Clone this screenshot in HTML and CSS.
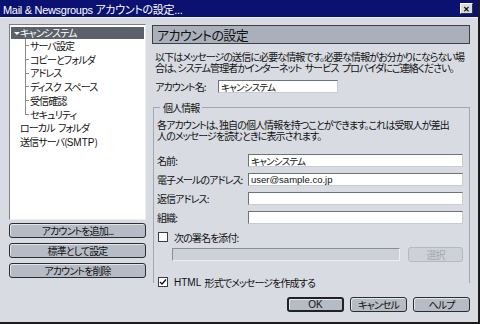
FILE: index.html
```html
<!DOCTYPE html>
<html lang="ja">
<head>
    <meta charset="UTF-8">
    <meta name="viewport" content="width=device-width, initial-scale=1.0">
    <title>アカウントの設定</title>
    <link rel="stylesheet" href="styles.css">
</head>
<body>
    <div class="window">
        <div class="titlebar">
            <span class="title">Mail &amp; Newsgroups アカウントの設定...</span>
            <span class="close">✕</span>
        </div>

        <div class="main">
            <div class="side">
                <div class="tree">
                    <div class="node selected"><span class="twisty"></span>キャンシステム</div>
                    <ul class="children">
                        <li>サーバ設定</li>
                        <li>コピーとフォルダ</li>
                        <li>アドレス</li>
                        <li>ディスク スペース</li>
                        <li>受信確認</li>
                        <li>セキュリティ</li>
                    </ul>
                    <div class="node">ローカル フォルダ</div>
                    <div class="node">送信サーバ(<span class="latin">SMTP</span>)</div>
                </div>
                <div class="side-buttons">
                    <button class="btn">アカウントを追加...</button>
                    <button class="btn">標準として設定</button>
                    <button class="btn">アカウントを削除</button>
                </div>
            </div>

            <div class="panel">
                <div class="panel-head">アカウントの設定</div>
                <p class="intro">以下はメッセージの送信に必要な情報です。必要な情報がお分かりにならない場<br>合は、システム管理者かインターネット サービス プロバイダにご連絡ください。</p>
                <div class="account-row">
                    <label>アカウント名:</label>
                    <input class="field account-field" type="text" value="キャンシステム">
                </div>

                <fieldset class="group">
                    <legend>個人情報</legend>
                    <p class="group-text">各アカウントは、独自の個人情報を持つことができます。これは受取人が差出<br>人のメッセージを読むときに表示されます。</p>
                    <div class="form-row">
                        <label>名前:</label>
                        <input class="field" type="text" value="キャンシステム">
                    </div>
                    <div class="form-row">
                        <label>電子メールのアドレス:</label>
                        <input class="field latin" type="text" value="user@sample.co.jp">
                    </div>
                    <div class="form-row">
                        <label>返信アドレス:</label>
                        <input class="field" type="text" value="">
                    </div>
                    <div class="form-row">
                        <label>組織:</label>
                        <input class="field" type="text" value="">
                    </div>
                    <div class="check-row sig-check">
                        <span class="check"></span>次の署名を添付:
                    </div>
                    <div class="sig-row">
                        <input class="field sig-field" type="text" disabled>
                        <button class="btn pick" disabled>選択</button>
                    </div>
                    <div class="check-row html-check">
                        <span class="check"><svg width="8" height="8" viewBox="0 0 8 8"><path d="M1 4 L3 6 L7 1.5" fill="none" stroke="#111" stroke-width="1.4"/></svg></span><span class="latin">HTML</span>&nbsp;形式でメッセージを作成する
                    </div>
                </fieldset>
            </div>
        </div>

        <div class="footer">
            <button class="btn default">OK</button>
            <button class="btn">キャンセル</button>
            <button class="btn">ヘルプ</button>
        </div>
    </div>
</body>
</html>
```

FILE: styles.css
```css
* {
    box-sizing: border-box;
}
body {
    margin: 0;
    background: #d8dbe2;
    font-family: "Noto Sans CJK JP", "Liberation Sans", sans-serif;
    font-size: 10px;
    font-feature-settings: "palt";
    letter-spacing: -0.9px;
    word-spacing: 2px;
    color: #111;
}
.window {
    width: 480px;
    height: 324px;
    display: flex;
    flex-direction: column;
    border-right: 2px solid #1c1c1c;
    border-bottom: 2px solid #1c1c1c;
    overflow: hidden;
}
.titlebar {
    height: 18px;
    flex: none;
    background: #0b1170;
    color: #fff;
    display: flex;
    align-items: center;
    justify-content: space-between;
    padding: 0 5px 0 3px;
    border-bottom: 1px solid #eef0f4;
}
.title {
    font-family: "Liberation Sans", "Noto Sans CJK JP", sans-serif;
    font-size: 11px;
    letter-spacing: -0.3px;
    word-spacing: 0;
}
.close {
    width: 13px;
    height: 11px;
    background: #d8dbe2;
    color: #000;
    font-size: 8px;
    font-weight: bold;
    line-height: 9px;
    letter-spacing: 0;
    text-align: center;
    border: 1px solid;
    border-color: #fff #333 #333 #fff;
}
.main {
    display: flex;
    padding: 6px 0 0 9px;
}
.side {
    width: 137px;
    flex: none;
}
.tree {
    height: 196px;
    background: #fff;
    border: 1px solid;
    border-color: #7a7e86 #eceef2 #eceef2 #7a7e86;
    padding: 2px 1px;
    line-height: 13.7px;
    white-space: nowrap;
}
.node {
    padding-left: 9px;
}
.node.selected {
    height: 12px;
    line-height: 12px;
    padding-left: 3px;
    background: #5c606a;
    color: #fff;
}
.twisty {
    display: inline-block;
    vertical-align: middle;
    margin: -2px 0 0 0;
    width: 6px;
    border-left: 3px solid transparent;
    border-right: 3px solid transparent;
    border-top: 3px solid #fff;
}
.children {
    list-style: none;
    margin: 0;
    padding: 0 0 0 14px;
}
.children li {
    padding-left: 5px;
    background:
        linear-gradient(#8a8a8a, #8a8a8a) 0 0 / 1px 100% no-repeat,
        linear-gradient(#8a8a8a, #8a8a8a) 0 50% / 4px 1px no-repeat;
}
.children li:last-child {
    background-size: 1px 50%, 4px 1px;
}
.side-buttons {
    margin-top: 3px;
}
.btn {
    display: block;
    height: 15px;
    padding: 0;
    border: 1px solid #2b2d33;
    border-radius: 3px;
    background: #b6bcc6;
    box-shadow: inset 1px 1px 0 #e2e5ea;
    font-family: inherit;
    font-size: 10px;
    font-feature-settings: "palt";
    letter-spacing: -0.9px;
    line-height: 13px;
    color: #111;
}
.side-buttons .btn {
    width: 100%;
    margin-bottom: 5px;
}
.panel {
    width: 318px;
    margin-left: 6px;
    padding-top: 1px;
}
.panel-head {
    height: 19px;
    background: #a9b0bc;
    border: 1px solid #3c3f46;
    padding-left: 4px;
    font-size: 13px;
    letter-spacing: -0.6px;
    line-height: 17px;
}
.intro {
    margin: 7px 0 0 3px;
    line-height: 11px;
    white-space: nowrap;
}
.account-row {
    display: flex;
    align-items: center;
    margin: 6px 0 0 3px;
}
.account-row label {
    width: 63px;
}
.field {
    height: 13px;
    padding: 0 2px;
    border: 1px solid;
    border-color: #6e727a #c8ccd3 #c8ccd3 #6e727a;
    background: #fff;
    font-family: inherit;
    font-size: 9.5px;
    font-feature-settings: "palt";
    letter-spacing: -0.8px;
    color: #111;
    outline: none;
}
.account-field {
    width: 120px;
}
.latin,
.field.latin {
    font-family: "Liberation Sans", sans-serif;
    letter-spacing: 0;
}
.group {
    margin: 8px 0 0 1px;
    width: 317px;
    height: 181px;
    padding: 0 6px 0 3px;
    border: 1px solid #a2a7b0;
    border-bottom: none;
}
.group legend {
    margin-left: 3px;
    padding: 0 3px;
    line-height: 11px;
}
.group-text {
    margin: 6px 0 0 0;
    line-height: 11px;
    white-space: nowrap;
}
.form-row {
    display: flex;
    align-items: center;
    margin-top: 4px;
    white-space: nowrap;
}
.group-text + .form-row {
    margin-top: 12px;
}
.form-row label {
    width: 91px;
    flex: none;
}
.form-row .field {
    width: 215px;
}
.check-row {
    display: flex;
    align-items: center;
    height: 12px;
    margin-left: 1px;
    white-space: nowrap;
}
.sig-check {
    margin-top: 6px;
}
.html-check {
    margin-top: 14px;
}
.check {
    width: 10px;
    height: 10px;
    margin-right: 6px;
    background: #fff;
    border: 1px solid #3a3d44;
    display: flex;
    align-items: center;
    justify-content: center;
}
.sig-row {
    display: flex;
    align-items: center;
    margin-top: 4px;
}
.sig-field {
    width: 228px;
    margin-left: 15px;
    background: #cdd1d8;
    border-color: #8a8e96 #eceef2 #eceef2 #8a8e96;
}
.btn.pick {
    width: 55px;
    margin-left: 8px;
    background: #cdd1d8;
    border-color: #b4b8c0;
    box-shadow: none;
    color: #a3a7af;
}
.footer {
    margin-top: auto;
    display: flex;
    justify-content: flex-end;
    gap: 6px;
    padding: 0 8px 10px 0;
}
.footer .btn {
    width: 57px;
}
.btn.default {
    border: 2px solid #1f2126;
    line-height: 11px;
    font-family: "Liberation Sans", sans-serif;
    letter-spacing: 0;
}
```
